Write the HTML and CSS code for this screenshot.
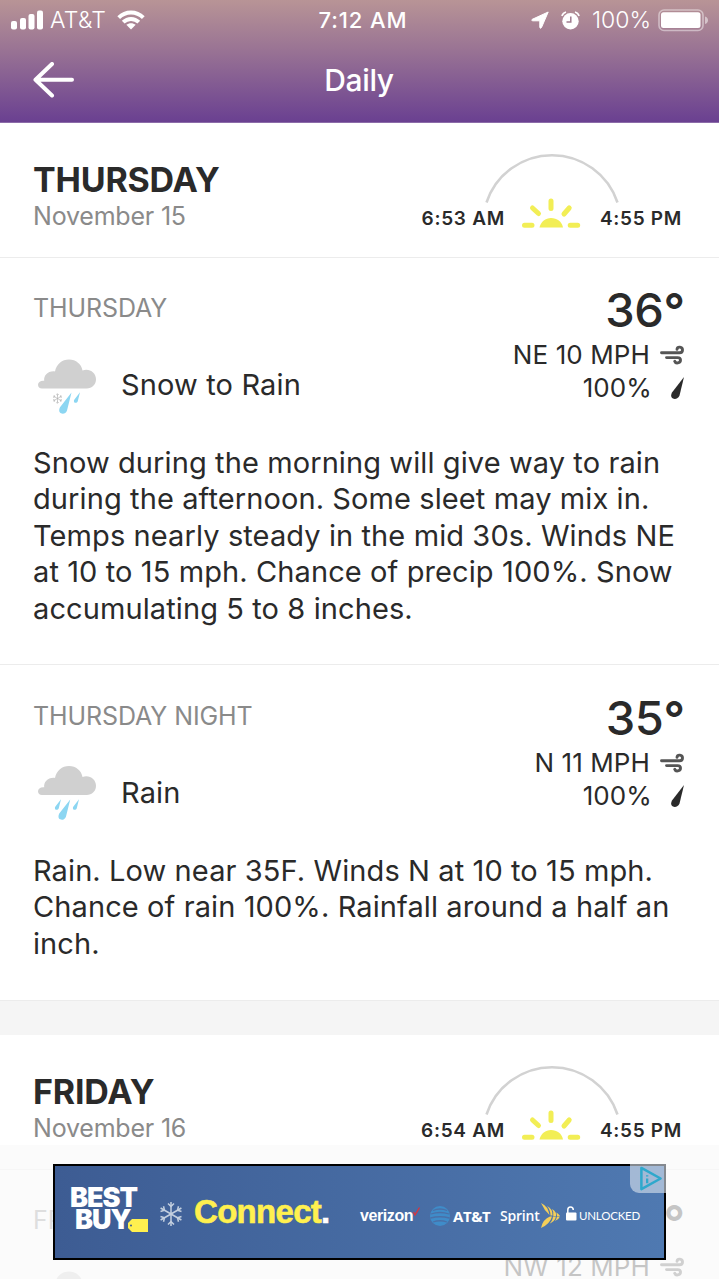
FILE: index.html
```html
<!DOCTYPE html>
<html lang="en">
<head>
    <meta charset="UTF-8">
    <meta name="viewport" content="width=device-width, initial-scale=1.0">
    <title>Daily</title>
    <link rel="stylesheet" href="styles.css">
</head>
<body>
    <!-- shared icons -->
    <svg class="defs" width="0" height="0">
        <symbol id="cloud" viewBox="0 0 58 30">
            <path fill="#d0d0d0" d="M4 29.500C1.500 29.500 0 27.800 0 25.700C0 23.200 2.500 21.400 6.200 21.800C5.500 16.500 10 11.600 17 12.400C18.500 5 24 0.500 31 0.500C38 0.500 43.500 5.200 44.500 11.500C51 9 58 13.300 58 20.300C58 25.500 54 29.500 48.700 29.500Z"/>
        </symbol>
        <symbol id="drop" viewBox="0 0 13 22">
            <path fill="#8cd6f2" d="M12.500 0.500L8 18.500C7 21.500 4 22.300 2 21.300C-.2 20.200 -.2 17.500 1 15.300Z"/>
        </symbol>
        <symbol id="sunrise" viewBox="0 0 60 30">
            <g stroke="#f2ee55" stroke-width="5" stroke-linecap="round">
                <path d="M3.500 27.200H11M49.200 27.200H56.700M30 3V10.500M11.500 10L17.500 15.500M48.200 10L43 16"/>
            </g>
            <path fill="#f2ee55" d="M18.500 29.500C20 23.500 24.500 20 30 20C36 20 40.800 23.500 42 29.500Z"/>
        </symbol>
        <symbol id="wind" viewBox="0 0 24 20">
            <g fill="none" stroke="#555" stroke-width="2.900" stroke-linecap="round">
                <path d="M1.500 7.800H19.500C21.500 7.800 22.500 6.500 22.500 5C22.500 1.500 17.500 1.200 17 4.200"/>
                <path d="M6.500 12.600H17.500C19.500 12.600 20.500 13.600 20.500 15C20.500 18.500 15.500 18.800 14.700 16.300"/>
            </g>
        </symbol>
        <symbol id="precip" viewBox="0 0 13 22">
            <path fill="#2a2a2a" d="M13 0L8.500 18.500C7.500 21.500 4 22.500 2 21.500C-.3 20.300 -.2 17.800 1 15.500Z"/>
        </symbol>
        <symbol id="flake" viewBox="0 0 24 26">
            <g fill="none" stroke-width="1.500">
                <path d="M12 1V25M1.600 7L22.400 19M22.400 7L1.600 19"/>
                <path d="M9 2.500L12 5.500L15 2.500M9 23.500L12 20.500L15 23.500M1.500 10.500L5.500 9.300L4.500 5.200M22.500 15.500L18.500 16.700L19.500 20.800M22.500 10.500L18.500 9.300L19.500 5.200M1.500 15.500L5.500 16.700L4.500 20.800"/>
            </g>
        </symbol>
    </svg>

    <header class="top">
        <div class="status">
            <div class="status-left">
                <svg class="signal" viewBox="0 0 33 20" fill="#fff">
                    <rect x="0" y="11" width="6" height="8.500" rx="2"/>
                    <rect x="9" y="8" width="6" height="11.500" rx="2"/>
                    <rect x="17.500" y="4" width="6" height="15.500" rx="2"/>
                    <rect x="26" y="0.500" width="6" height="19" rx="2"/>
                </svg>
                <span class="carrier">AT&amp;T</span>
                <svg class="wifi" viewBox="0 0 28 20">
                    <g fill="none" stroke="#fff" stroke-width="3.900">
                        <path d="M1.700 7.600C8.600 0.700 19.400 0.700 26.300 7.600"/>
                        <path d="M6.200 12.200C10.600 7.900 17.400 7.900 21.800 12.200"/>
                    </g>
                    <path fill="#fff" d="M14 19.500L9.300 14.800C12 12.600 16 12.600 18.700 14.800Z"/>
                </svg>
            </div>
            <span class="clock">7:12 AM</span>
            <div class="status-right">
                <svg class="locate" viewBox="0 0 18 18"><path fill="#fff" stroke="#fff" stroke-linejoin="round" d="M17.200 1L10.500 16.500C10 17.600 8.800 17.400 8.800 16.200V9.800H1.800C.6 9.800 .4 8.800 1.300 8.300Z"/></svg>
                <svg class="alarm" viewBox="0 0 19 19">
                    <circle cx="9.500" cy="10.300" r="8.200" fill="#fff"/>
                    <path d="M0.800 4.800Q2 1.800 5 1M18.200 4.800Q17 1.800 14 1" fill="none" stroke="#fff" stroke-width="1.800"/>
                    <path d="M9.800 5.500V11H5.500" fill="none" stroke="#a07c90" stroke-width="1.500"/>
                </svg>
                <span class="level">100%</span>
                <svg class="battery" viewBox="0 0 50 23">
                    <rect x="1" y="1" width="44" height="20.500" rx="5" fill="none" stroke="#fff" stroke-opacity=".45" stroke-width="1.600"/>
                    <rect x="3" y="3.300" width="39.500" height="15.800" rx="2.500" fill="#fff"/>
                    <path d="M47 7.500Q50 8.500 50 11.300T47 15Z" fill="#fff" fill-opacity=".5"/>
                </svg>
            </div>
        </div>
        <div class="nav">
            <svg class="back" viewBox="0 0 41 36"><path d="M19 2L2.500 17.800L19 33.500M2.500 17.800H39" fill="none" stroke="#fff" stroke-width="4" stroke-linecap="round" stroke-linejoin="round"/></svg>
            <h1>Daily</h1>
        </div>
    </header>

    <main>
        <div class="day">
            <div class="date">
                <h2>THURSDAY</h2>
                <p>November 15</p>
            </div>
            <div class="sun">
                <svg class="arc" viewBox="0 0 134 52"><path d="M1.500 50.500A69 69 0 0 1 132.500 50.500" fill="none" stroke="#d2d2d2" stroke-width="2.600"/></svg>
                <div class="sun-row">
                    <span>6:53 AM</span>
                    <svg class="sunrise"><use href="#sunrise"/></svg>
                    <span>4:55 PM</span>
                </div>
            </div>
        </div>

        <section class="part">
            <div class="summary">
                <div class="left">
                    <h3 class="name">THURSDAY</h3>
                    <div class="cond">
                        <svg class="icon" viewBox="0 0 58 60">
                            <use href="#cloud" x="0" y="5" width="58" height="30"/>
                            <use href="#flake" x="14" y="39" width="11" height="11" stroke="#b0b0b0"/>
                            <use href="#drop" x="21" y="38" width="13" height="22"/>
                            <use href="#drop" x="35.500" y="38" width="7" height="11"/>
                        </svg>
                        <span>Snow to Rain</span>
                    </div>
                </div>
                <div class="right">
                    <div class="temp">36<b>°</b></div>
                    <div class="stat">NE 10 MPH <svg class="wind"><use href="#wind"/></svg></div>
                    <div class="stat">100% <svg class="precip"><use href="#precip"/></svg></div>
                </div>
            </div>
            <p class="desc">Snow during the morning will give way to rain<br>during the afternoon. Some sleet may mix in.<br>Temps nearly steady in the mid 30s. Winds NE<br>at 10 to 15 mph. Chance of precip 100%. Snow<br>accumulating 5 to 8 inches.</p>
        </section>

        <section class="part night">
            <div class="summary">
                <div class="left">
                    <h3 class="name">THURSDAY NIGHT</h3>
                    <div class="cond">
                        <svg class="icon" viewBox="0 0 58 60">
                            <use href="#cloud" x="0" y="3.500" width="58" height="30"/>
                            <use href="#drop" x="16.500" y="37" width="7" height="11"/>
                            <use href="#drop" x="20" y="37" width="13" height="21"/>
                            <use href="#drop" x="34.500" y="37" width="7" height="11"/>
                        </svg>
                        <span>Rain</span>
                    </div>
                </div>
                <div class="right">
                    <div class="temp">35<b>°</b></div>
                    <div class="stat">N 11 MPH <svg class="wind"><use href="#wind"/></svg></div>
                    <div class="stat">100% <svg class="precip"><use href="#precip"/></svg></div>
                </div>
            </div>
            <p class="desc">Rain. Low near 35F. Winds N at 10 to 15 mph.<br>Chance of rain 100%. Rainfall around a half an<br>inch.</p>
        </section>

        <div class="gap"></div>

        <div class="day">
            <div class="date">
                <h2>FRIDAY</h2>
                <p>November 16</p>
            </div>
            <div class="sun">
                <svg class="arc" viewBox="0 0 134 52"><path d="M1.500 50.500A69 69 0 0 1 132.500 50.500" fill="none" stroke="#d2d2d2" stroke-width="2.600"/></svg>
                <div class="sun-row">
                    <span>6:54 AM</span>
                    <svg class="sunrise"><use href="#sunrise"/></svg>
                    <span>4:55 PM</span>
                </div>
            </div>
        </div>

        <section class="part last">
            <div class="summary">
                <div class="left">
                    <h3 class="name">FRIDAY</h3>
                    <div class="cond">
                        <svg class="icon" viewBox="0 0 58 60"><use href="#cloud" x="0" y="5" width="58" height="30"/></svg>
                    </div>
                </div>
                <div class="right">
                    <div class="temp">38<b>°</b></div>
                    <div class="stat">NW 12 MPH <svg class="wind"><use href="#wind"/></svg></div>
                </div>
            </div>
        </section>
    </main>

    <!-- sticky ad -->
    <div class="ad-bar">
        <div class="ad">
            <div class="bestbuy">
                <span>BEST</span>
                <span class="buy">BUY</span>
                <svg class="tag" viewBox="0 0 20 13"><path fill="#fff04f" d="M4 0H20V13H4L0 9V4Z"/><circle cx="3" cy="6.500" r="1" fill="#3d5c92"/></svg>
            </div>
            <svg class="snow" stroke="#c3cfdf"><use href="#flake"/></svg>
            <span class="connect">Connect<b>.</b></span>
            <div class="verizon">verizon<svg viewBox="0 0 7 9"><path d="M0.500 5L2 8L6.500 0.500" fill="none" stroke="#d8343f" stroke-width="1.400"/></svg></div>
            <div class="att">
                <svg viewBox="0 0 20 20">
                    <circle cx="10" cy="10" r="10" fill="#3f8cc9"/>
                    <path d="M3 4.500Q10 1.500 17 4.500M1 8Q10 5 19 8M0.500 12Q10 9.500 19.500 12M3 16Q10 13.500 17 16" fill="none" stroke="#4a70a8" stroke-width="1.300"/>
                </svg>AT&amp;T
            </div>
            <div class="sprint">Sprint<svg viewBox="0 0 20 25">
                <g fill="#f5cf58"><path d="M1 0Q8 3 9.500 12Q4 7 1 0Z"/><path d="M7 3Q13 6 12.500 12.500L10.500 12.500Q10.500 7 7 3Z"/><path d="M12 6Q17 9 16 13H13.300Q14 9 12 6Z"/><path d="M16.500 9.500Q19 11 20 13H17Z"/><path d="M1 25Q3 16 10 13.500H12Q10 21 1 25Z"/><path d="M9 21Q12.500 18 13 13.500H16Q15 18.500 9 21Z"/><path d="M15 18Q16.500 16 17 13.500H20Q18.500 17 15 18Z"/></g>
            </svg></div>
            <div class="unlocked"><svg viewBox="0 0 11 15"><rect y="6.500" width="10.500" height="8" rx="1" fill="#fff"/><path d="M1.800 7V4Q1.800 1 4.500 1T7.300 4" fill="none" stroke="#fff" stroke-width="1.500"/></svg>UNLOCKED</div>
            <div class="choices"><svg viewBox="0 0 24 26"><path d="M2 2L22 13L2 24Z" fill="none" stroke="#2fa8cc" stroke-width="2.600" stroke-linejoin="round"/><path d="M8 13V18M8 9.500V11" stroke="#2fa8cc" stroke-width="2.400"/></svg></div>
        </div>
    </div>
</body>
</html>
```
FILE: styles.css
```css
*{
    margin: 0px;
    padding: 0px;
    box-sizing: border-box;
}
html{
    height: 1279px;
    overflow: hidden;
}
body{
    width: 719px;
    height: 1279px;
    overflow: hidden;
    background-color: white;
    color: #2a2a2a;
    font-family: Inter, "Liberation Sans", sans-serif;
}
svg{
    display: block;
    flex-shrink: 0;
}
.defs{
    position: absolute;
}

/* header */
.top{
    height: 123px;
    color: white;
    background: linear-gradient(#b89496, #9a7494 40%, #6a4091);
    border-bottom: 1px solid #8c6ca9;
}
.status{
    height: 40px;
    display: grid;
    grid-template-columns: 1fr auto 1fr;
    align-items: center;
    padding: 0px 11px;
    font-size: 23px;
}
.status-left,.status-right{
    display: flex;
    align-items: center;
}
.status-right{
    justify-content: flex-end;
}
.signal{
    width: 33px;
    height: 20px;
}
.carrier{
    margin: 0px 11px 0px 6px;
    font-weight: 300;
    letter-spacing: 0.3px;
}
.wifi{
    width: 28px;
    height: 20px;
}
.clock{
    padding-left: 7px;
    font-weight: 500;
    font-size: 22px;
    letter-spacing: 0.9px;
}
.locate{
    width: 18px;
    height: 18px;
}
.alarm{
    width: 19px;
    height: 19px;
    margin: 0px 12px;
}
.level{
    font-weight: 300;
    margin-right: 7px;
}
.battery{
    width: 50px;
    height: 23px;
}
.nav{
    height: 82px;
    display: grid;
    grid-template-columns: 1fr auto 1fr;
    align-items: center;
    padding: 0px 34px 2px 33px;
}
.back{
    width: 41px;
    height: 36px;
}
h1{
    font-size: 30px;
    font-weight: 500;
    letter-spacing: -0.4px;
}

/* day title */
.day{
    height: 135px;
    border-bottom: 1px solid #ececec;
    display: flex;
    justify-content: space-between;
    padding: 0px 37px 0px 33px;
}
.date{
    padding-top: 36px;
}
h2{
    font-size: 34px;
    line-height: 42px;
    font-weight: 700;
    letter-spacing: -0.2px;
}
.date p{
    color: #8a8a8a;
    font-size: 25px;
    line-height: 30px;
    letter-spacing: -0.2px;
}
.sun{
    display: flex;
    flex-direction: column;
    align-items: center;
    padding-top: 29px;
}
.arc{
    width: 134px;
    height: 52px;
}
.sun-row{
    display: flex;
    align-items: center;
    gap: 16px;
    height: 30px;
    margin-top: -6px;
    font-size: 19px;
    font-weight: 600;
    letter-spacing: 0.7px;
}
.sun-row span{
    padding-top: 10px;
}
.sunrise{
    width: 60px;
    height: 30px;
    margin-right: 3px;
}

/* forecast */
.part{
    padding: 26px 35px 37px 33px;
    border-bottom: 1px solid #ececec;
}
.night{
    padding-top: 27px;
    padding-bottom: 38px;
}
.summary{
    display: flex;
    justify-content: space-between;
    height: 131px;
}
.name{
    padding-top: 6px;
    color: #8a8a8a;
    font-size: 25px;
    line-height: 36px;
    font-weight: 400;
    letter-spacing: -0.1px;
}
.cond{
    display: flex;
    align-items: center;
    gap: 25px;
    height: 60px;
    margin: 28px 0px 0px 5px;
    font-size: 29px;
    letter-spacing: 0.15px;
}
.icon{
    width: 58px;
    height: 60px;
}
.right{
    display: flex;
    flex-direction: column;
    align-items: flex-end;
}
.temp{
    margin: -2px 1px 0px 0px;
    font-size: 47px;
    line-height: 56px;
    font-weight: 500;
    letter-spacing: -0.4px;
}
.temp b{
    font-weight: 600;
    letter-spacing: -2px;
}
.stat{
    display: flex;
    align-items: center;
    gap: 10px;
    font-size: 26px;
    line-height: 33px;
    letter-spacing: 0.1px;
}
.wind{
    width: 24px;
    height: 20px;
}
.precip{
    width: 13px;
    height: 22px;
    margin-left: 9px;
}
.desc{
    margin-top: 30px;
    font-size: 29px;
    line-height: 36.4px;
    letter-spacing: 0.1px;
    white-space: nowrap;
}
.gap{
    height: 34px;
    background-color: #f5f5f5;
}
.last{
    height: 109px;
    padding-bottom: 0px;
    border-bottom: none;
    overflow: hidden;
}

/* ad */
.ad-bar{
    position: fixed;
    left: 0px;
    top: 1145px;
    width: 719px;
    height: 134px;
    padding: 19px 53px;
    background-color: rgba(250,250,250,0.75);
}
.ad{
    position: relative;
    width: 613px;
    height: 96px;
    border: 2px solid black;
    background: linear-gradient(90deg, #3d5c93, #4f79b1);
    color: white;
    display: flex;
    align-items: center;
    padding: 7px 0px 0px 15px;
    white-space: nowrap;
}
.bestbuy{
    position: relative;
    width: 79px;
    height: 50px;
    margin-top: -7px;
    font-weight: 900;
    font-size: 27px;
    line-height: 21.5px;
    letter-spacing: -1px;
}
.bestbuy span{
    display: block;
}
.buy{
    padding-left: 5px;
}
.tag{
    position: absolute;
    right: 1px;
    bottom: 5px;
    width: 20px;
    height: 13px;
}
.snow{
    width: 24px;
    height: 26px;
    margin: -4px 0px 0px 10px;
}
.connect{
    margin: -7px 0px 0px 11px;
    width: 166px;
    color: #fff04f;
    font-family: "Liberation Sans", sans-serif;
    font-weight: 700;
    font-size: 33px;
    letter-spacing: -0.7px;
    -webkit-text-stroke: 0.6px;
}
.connect b{
    color: white;
}
.verizon{
    display: flex;
    width: 70px;
    font-family: "Liberation Sans", sans-serif;
    font-weight: 700;
    font-size: 16px;
    letter-spacing: -0.4px;
}
.verizon svg{
    width: 7px;
    height: 9px;
}
.att{
    display: flex;
    align-items: center;
    gap: 3px;
    width: 70px;
    font-family: "Open Sans", sans-serif;
    font-weight: 700;
    font-size: 15px;
    letter-spacing: -0.4px;
}
.att svg{
    width: 20px;
    height: 20px;
}
.sprint{
    display: flex;
    align-items: center;
    width: 66px;
    font-family: "Open Sans", sans-serif;
    font-weight: 600;
    font-size: 14px;
    letter-spacing: -0.2px;
}
.sprint svg{
    width: 20px;
    height: 25px;
}
.unlocked{
    display: flex;
    align-items: center;
    gap: 2px;
    font-family: Lato, sans-serif;
    font-size: 11.5px;
    letter-spacing: -0.2px;
}
.unlocked svg{
    width: 11px;
    height: 15px;
    margin-top: -4px;
}
.choices{
    position: absolute;
    right: -2px;
    top: -2px;
    width: 36px;
    height: 29px;
    padding: 2px 0px 0px 9px;
    background-color: rgba(220,228,238,0.6);
    border-bottom-left-radius: 9px;
}
.choices svg{
    width: 24px;
    height: 25px;
}
```
